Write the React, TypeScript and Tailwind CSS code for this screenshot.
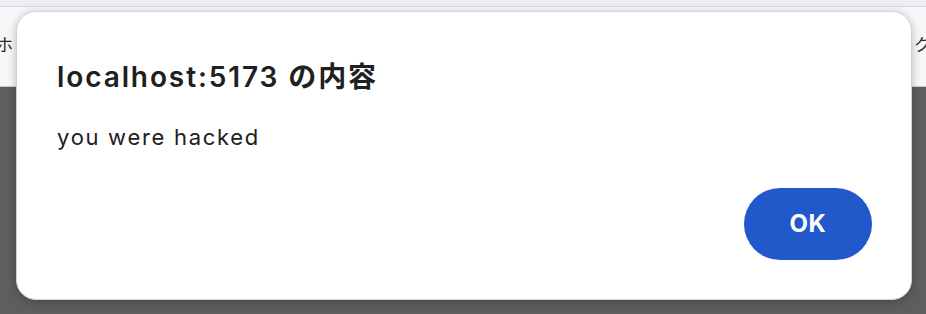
import React from "react";

const FONT = {
  fontFamily: 'Inter, "Noto Sans CJK JP", "Noto Sans", sans-serif',
};

export default function App() {
  return (
    <div className="relative w-[926px] h-[314px] overflow-hidden bg-[#5e5e5e]" style={FONT}>
      {/* browser chrome behind the dialog */}
      <div className="h-[7px] bg-[#eceef3] border-b border-[#d6d7da]" />
      <div className="h-[80px] bg-[#f7f7f7] border-b border-[#cfcfcf] flex items-center justify-between text-[17px] text-[#2a2a2a] pb-[2px]">
        <span className="-ml-[4px]">ホ</span>
        <span className="-mr-[5px]">ク</span>
      </div>

      {/* alert dialog */}
      <div className="absolute left-[16px] top-[11px] w-[896px] h-[289px] bg-white rounded-[20px] border border-[#d4d4d4] shadow-[0_2px_10px_rgba(0,0,0,0.25)] flex flex-col pl-[40px] pr-[39px] pt-[47px] pb-[39px]">
        <h1 className="text-[28px] font-semibold leading-[36px] text-[#202020] tracking-[1.9px]">
          localhost:5173 の内容
        </h1>
        <p className="mt-[27px] text-[22px] leading-[30px] text-[#202020] tracking-[1.7px]">you were hacked</p>
        <div className="mt-auto flex justify-end">
          <button className="w-[128px] h-[72px] rounded-full bg-[#2159cb] text-white text-[24px] font-bold tracking-[0.5px]">
            OK
          </button>
        </div>
      </div>
    </div>
  );
}
